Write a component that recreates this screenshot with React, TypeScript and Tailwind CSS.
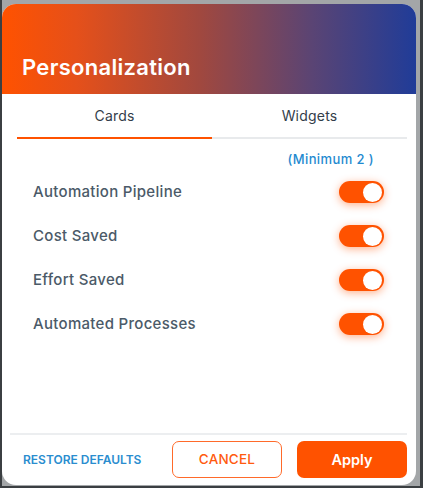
import React from "react";

const rows = ["Automation Pipeline", "Cost Saved", "Effort Saved", "Automated Processes"];

function Toggle() {
  return (
    <div className="w-[45px] h-[22px] rounded-full bg-[#ff5200] shadow-[0_2px_8px_rgba(255,82,0,0.45)] flex items-center justify-end pr-[2px]">
      <div className="w-[19px] h-[19px] rounded-full bg-white" />
    </div>
  );
}

export default function App() {
  return (
    <div
      className="w-[423px] h-[488px] bg-[#a3a6a8] border-l-2 border-r-[3px] border-b-[2px] border-[#3b3f42] pt-[4px] pr-[4px] pb-[1px] overflow-hidden"
      style={{ fontFamily: "Inter, 'Noto Sans', sans-serif" }}
    >
      <div className="w-full h-full bg-white rounded-[14px] overflow-hidden flex flex-col">
        <div className="h-[90px] shrink-0 bg-[linear-gradient(90deg,#ff5200_0%,#e5501a_18%,#a0483f_48%,#5a4474_75%,#203c98_100%)] flex items-end pl-[20px] pb-[12px]">
          <h1 className="text-white text-[22px] leading-[30px] font-semibold tracking-[0.3px]">Personalization</h1>
        </div>
        <div className="mx-[15px] mr-[9px] h-[45px] shrink-0 flex border-b-2 border-[#e8eaec]">
          <div className="flex-1 flex items-center justify-center text-[14px] text-[#333d4a] tracking-[0.2px] border-b-2 border-[#ff5200] -mb-[2px]">Cards</div>
          <div className="flex-1 flex items-center justify-center text-[14px] text-[#333d4a] tracking-[0.2px]">Widgets</div>
        </div>
        <div className="flex justify-end pr-[42px] pt-[11px] h-[31px] shrink-0">
          <span className="text-[13px] font-medium text-[#1f8ad0] tracking-[0.4px]">(Minimum 2 )</span>
        </div>
        <div className="flex flex-col pl-[31px] pr-[32px]">
          {rows.map((r) => (
            <div key={r} className="h-[44px] flex items-center justify-between">
              <span className="text-[15px] font-medium text-[#4b5a68] tracking-[0.3px]">{r}</span>
              <Toggle />
            </div>
          ))}
        </div>
        <div className="flex-1" />
        <div className="mx-[8px] mr-[9px] border-t-2 border-[#eceef0]" />
        <div className="h-[50px] shrink-0 flex items-start pt-[6px] pl-[21px] pr-[9px]">
          <button className="h-[37px] flex items-center text-[12px] font-semibold text-[#2a8dcf]">RESTORE DEFAULTS</button>
          <button className="ml-auto w-[110px] h-[37px] rounded-[7px] border border-[#ff6a2a] text-[#ff5a10] text-[13.5px] font-medium tracking-[0.2px]">CANCEL</button>
          <button className="ml-[15px] w-[110px] h-[37px] rounded-[7px] bg-[#ff5200] text-white text-[14.5px] font-semibold">Apply</button>
        </div>
      </div>
    </div>
  );
}
